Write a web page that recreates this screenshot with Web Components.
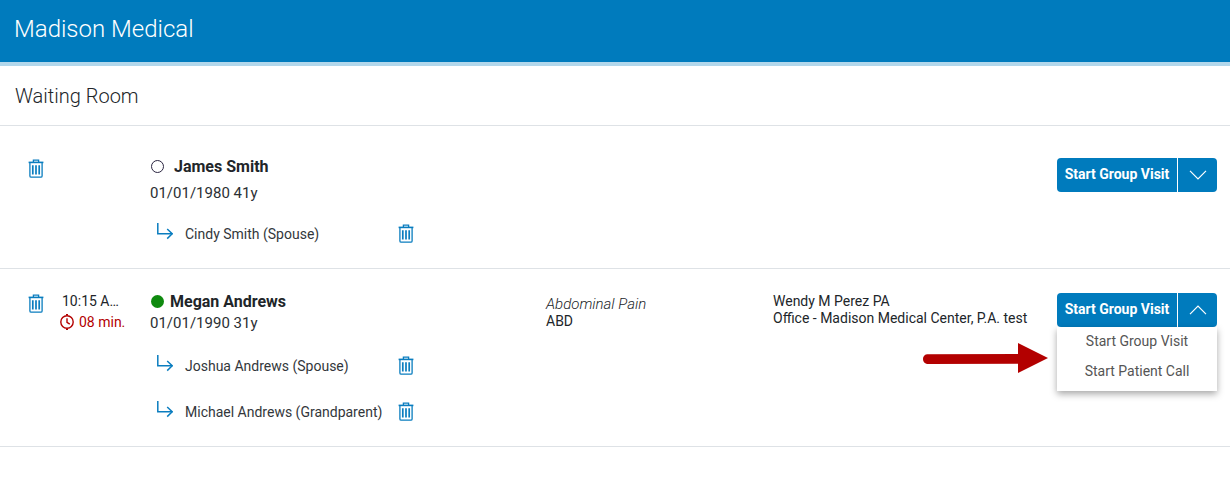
<!DOCTYPE html>
<html>
<head>
<meta charset="utf-8">
<title>Waiting Room</title>
<style>
  html, body { margin: 0; padding: 0; background: #fff; }
  body { font-family: Roboto, "Liberation Sans", sans-serif; color: #212529; }
</style>
</head>
<body>
<app-header>Madison Medical</app-header>
<page-title>Waiting Room</page-title>

<visit-row style="--row-top: 32px; --row-height: 142px; --dob-gap: 10px; --sub-top: 23px;">
  <patient-name slot="name" status="empty">James Smith</patient-name>
  <span slot="dob">01/01/1980 41y</span>
  <relation-line>Cindy Smith (Spouse)</relation-line>
  <visit-button slot="action"></visit-button>
</visit-row>

<visit-row style="--row-top: 24px; --row-height: 177px; --dob-gap: 5px; --sub-top: 25px;">
  <wait-time slot="time" at="10:15 A…" waited="08 min."></wait-time>
  <patient-name slot="name" status="online">Megan Andrews</patient-name>
  <span slot="dob">01/01/1990 31y</span>
  <relation-line>Joshua Andrews (Spouse)</relation-line>
  <relation-line>Michael Andrews (Grandparent)</relation-line>
  <span slot="reason"><i style="font-size: 15px; font-weight: 300;">Abdominal Pain</i><br>ABD</span>
  <span slot="provider">Wendy M Perez PA<br>Office - Madison Medical Center, P.A. test</span>
  <visit-button slot="action" open></visit-button>
  <red-arrow slot="action"></red-arrow>
</visit-row>

<script>
const TRASH = `<svg width="16" height="19" viewBox="0 0 16 19" fill="none" stroke="#0a7dbf" stroke-width="1.3">
  <path d="M5.4 3V1.2h5.2V3"/>
  <path d="M.6 3.4h14.8" stroke-width="1.6"/>
  <path d="M1.9 3.5v13.4c0 .8.5 1.3 1.3 1.3h9.6c.8 0 1.3-.5 1.3-1.3V3.5"/>
  <path d="M4.8 6.2v9.4M8 6.2v9.4M11.2 6.2v9.4" stroke-width="1.7"/>
</svg>`;

class AppHeader extends HTMLElement {
  constructor() {
    super();
    this.attachShadow({ mode: "open" });
    this.shadowRoot.innerHTML = `
      <style>
        :host {
          display: flex;
          align-items: center;
          height: 58px;
          padding: 0 0 4px 14px;
          background: #007bbd;
          border-bottom: 4px solid #b2d7eb;
          color: #fff;
          font-size: 24px;
          font-weight: 300;
        }
      </style>
      <slot></slot>`;
  }
}
customElements.define("app-header", AppHeader);

class PageTitle extends HTMLElement {
  constructor() {
    super();
    this.attachShadow({ mode: "open" });
    this.shadowRoot.innerHTML = `
      <style>
        :host {
          display: flex;
          align-items: center;
          height: 59px;
          padding-left: 15px;
          border-bottom: 1px solid #dee2e6;
          font-size: 20px;
          font-weight: 300;
        }
      </style>
      <slot></slot>`;
  }
}
customElements.define("page-title", PageTitle);

class VisitRow extends HTMLElement {
  constructor() {
    super();
    this.attachShadow({ mode: "open" });
    this.shadowRoot.innerHTML = `
      <style>
        :host {
          display: grid;
          grid-template-columns: 33px 66px 420px 227px 1fr 160px;
          box-sizing: border-box;
          height: calc(var(--row-height) + 1px);
          padding: var(--row-top) 13px 0 27px;
          border-bottom: 1px solid #dee2e6;
          font-size: 14px;
          color: #212529;
        }
        .trash { padding: 1px 0 0 1px; line-height: 0; }
        .time { min-width: 0; }
        .patient { margin: -1px 0 0 24px; }
        .dob { margin-top: var(--dob-gap); font-size: 15px; line-height: 16px; color: #2b2f33; }
        .subs { display: flex; flex-direction: column; gap: 27px; margin-top: var(--sub-top); }
        .reason { padding-top: 3px; line-height: 17px; }
        .provider { line-height: 17px; }
        .action { position: relative; }
      </style>
      <div class="trash">${TRASH}</div>
      <div class="time"><slot name="time"></slot></div>
      <div class="patient">
        <slot name="name"></slot>
        <div class="dob"><slot name="dob"></slot></div>
        <div class="subs"><slot></slot></div>
      </div>
      <div class="reason"><slot name="reason"></slot></div>
      <div class="provider"><slot name="provider"></slot></div>
      <div class="action"><slot name="action"></slot></div>`;
  }
}
customElements.define("visit-row", VisitRow);

class PatientName extends HTMLElement {
  constructor() {
    super();
    this.attachShadow({ mode: "open" });
    const online = this.getAttribute("status") === "online";
    this.shadowRoot.innerHTML = `
      <style>
        :host {
          display: flex;
          align-items: center;
          gap: ${online ? 6 : 10}px;
          height: 18px;
          font-size: 16px;
          font-weight: 700;
          padding-left: 1px;
        }
        .dot {
          box-sizing: border-box;
          width: 13px;
          height: 13px;
          border-radius: 50%;
          ${online ? "background: #0f8a0f;" : "border: 1.5px solid #2a2440;"}
        }
      </style>
      <span class="dot"></span><slot></slot>`;
  }
}
customElements.define("patient-name", PatientName);

class RelationLine extends HTMLElement {
  constructor() {
    super();
    this.attachShadow({ mode: "open" });
    this.shadowRoot.innerHTML = `
      <style>
        :host {
          display: flex;
          align-items: center;
          height: 19px;
          padding-left: 7px;
          font-size: 14px;
          color: #33373b;
        }
        .bend { flex: none; margin-top: -5px; }
        .name { width: 213px; margin-left: 12px; white-space: nowrap; }
        .trash { line-height: 0; }
      </style>
      <svg class="bend" width="16" height="17" viewBox="0 0 16 17" fill="none" stroke="#0a7dbf" stroke-width="1.5">
        <path d="M.8 0v10.8h14.6"/>
        <path d="M10.2 6l5 4.8-5 4.8"/>
      </svg>
      <span class="name"><slot></slot></span>
      <span class="trash">${TRASH}</span>`;
  }
}
customElements.define("relation-line", RelationLine);

class WaitTime extends HTMLElement {
  constructor() {
    super();
    this.attachShadow({ mode: "open" });
    this.shadowRoot.innerHTML = `
      <style>
        :host { display: block; font-size: 14px; }
        .at {
          padding-left: 2px;
          white-space: nowrap;
          line-height: 16px;
        }
        .waited {
          display: flex;
          align-items: center;
          gap: 5px;
          margin-top: 5px;
          line-height: 16px;
          color: #b30000;
          white-space: nowrap;
        }
      </style>
      <div class="at">${this.getAttribute("at")}</div>
      <div class="waited">
        <svg width="14" height="16" viewBox="0 0 14 16" fill="none" stroke="#b30000" stroke-width="1.4">
          <circle cx="7" cy="8" r="6.2"/>
          <path d="M7 4.2v4.2l2.8 1.8"/>
          <path d="M6 .6h2M6 15.4h2"/>
        </svg>
        ${this.getAttribute("waited")}
      </div>`;
  }
}
customElements.define("wait-time", WaitTime);

class VisitButton extends HTMLElement {
  constructor() {
    super();
    this.attachShadow({ mode: "open" });
    const open = this.hasAttribute("open");
    this.shadowRoot.innerHTML = `
      <style>
        :host { display: block; position: relative; width: 160px; font-size: 14px; }
        .group {
          display: flex;
          height: 34px;
          border-radius: 4px;
          overflow: hidden;
          background: #007bbd;
          color: #fff;
          font-weight: 700;
        }
        .main {
          box-sizing: border-box;
          width: 121px;
          padding-bottom: 2px;
          display: flex;
          align-items: center;
          justify-content: center;
          border-right: 1px solid #fff;
          white-space: nowrap;
        }
        .caret { flex: 1; display: flex; align-items: center; justify-content: center; }
        .menu {
          position: absolute;
          top: 34px;
          left: 0;
          right: 0;
          height: 64px;
          background: #fff;
          box-shadow: 0 3px 7px rgba(0, 0, 0, 0.35);
          color: #555;
          text-align: center;
        }
        .menu div { height: 30px; line-height: 29px; }
      </style>
      <div class="group">
        <div class="main">Start Group Visit</div>
        <div class="caret">
          <svg width="18" height="10" viewBox="0 0 18 10" fill="none" stroke="#fff" stroke-width="1.2">
            <path d="${open ? "M1 9.2L9 1.2l8 8" : "M1 .8l8 8 8-8"}"/>
          </svg>
        </div>
      </div>
      ${open ? `<div class="menu"><div>Start Group Visit</div><div>Start Patient Call</div></div>` : ""}`;
  }
}
customElements.define("visit-button", VisitButton);

class RedArrow extends HTMLElement {
  constructor() {
    super();
    this.attachShadow({ mode: "open" });
    this.shadowRoot.innerHTML = `
      <style>
        :host { position: absolute; left: -135px; top: 50px; line-height: 0; }
      </style>
      <svg width="126" height="30" viewBox="0 0 126 30">
        <path d="M5 11.2L96 11V0l30 15-30 15V20.8L5 21a5 5 0 0 1 0-9.8z" fill="#b30000"/>
      </svg>`;
  }
}
customElements.define("red-arrow", RedArrow);
</script>
</body>
</html>
